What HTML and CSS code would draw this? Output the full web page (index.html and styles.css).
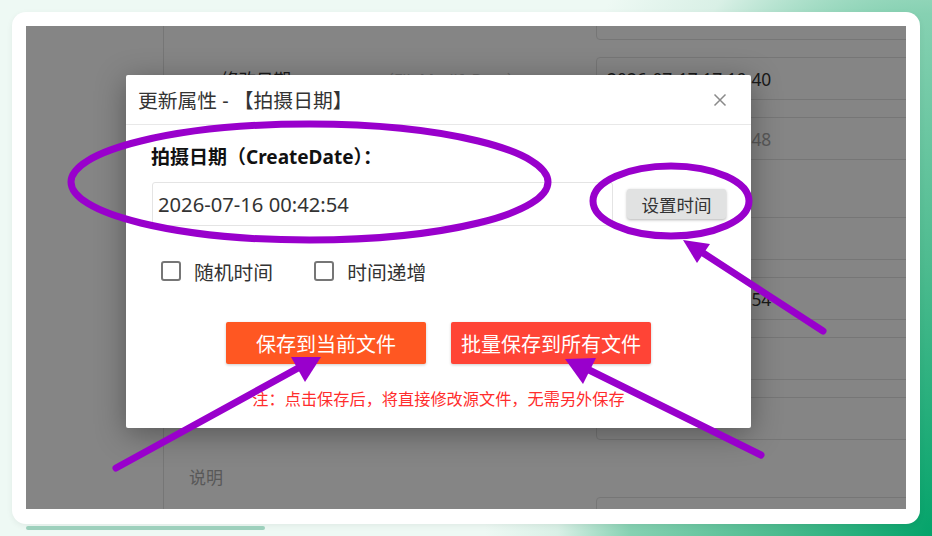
FILE: index.html
```html
<!DOCTYPE html>
<html lang="zh-CN">
<head>
<meta charset="utf-8">
<title>更新属性</title>
<link rel="stylesheet" href="styles.css">
</head>
<body>
<div class="page">
  <div class="card">
    <div class="screen">
      <div class="app">
        <aside class="side"></aside>
        <main class="form">
          <div class="field"><div class="cell"></div><div class="box"></div></div>
          <div class="field"><div class="cell"><span class="label">修改日期</span><span class="hint">（FileModifyDate）</span></div><div class="box">2026-07-17 17:19:40</div></div>
          <div class="field"><div class="cell"></div><div class="box muted">2026-07-16 00:42:48</div></div>
          <div class="spacer"></div>
          <div class="field"><div class="cell"></div><div class="box"></div></div>
          <div class="field"><div class="cell"></div><div class="box">2026-07-16 00:42:54</div></div>
          <div class="field"><div class="cell"></div><div class="box"></div></div>
          <div class="field"><div class="cell"></div><div class="box"></div></div>
          <div class="spacer"><span class="label2">说明</span></div>
          <div class="field"><div class="cell"></div><div class="box"></div></div>
        </main>
      </div>
      <div class="mask"></div>
      <div class="dialog">
        <div class="dlg-head">
          <span class="dlg-title">更新属性 - 【拍摄日期】</span>
          <svg class="close" width="14" height="14" viewBox="0 0 14 14"><path d="M1.5 1.5 L12.5 12.5 M12.5 1.5 L1.5 12.5" stroke="#8a8a8a" stroke-width="1.5" fill="none"/></svg>
        </div>
        <div class="dlg-body">
          <div class="lbl">拍摄日期（CreateDate）：</div>
          <div class="input-row">
            <div class="input">2026-07-16 00:42:54</div>
            <div class="set-btn">设置时间</div>
          </div>
          <div class="checks">
            <label class="check"><span class="cbox"></span><span>随机时间</span></label>
            <label class="check"><span class="cbox"></span><span>时间递增</span></label>
          </div>
          <div class="actions">
            <div class="btn btn-cur">保存到当前文件</div>
            <div class="btn btn-all">批量保存到所有文件</div>
          </div>
          <div class="note">注：点击保存后，将直接修改源文件，无需另外保存</div>
        </div>
      </div>
    </div>
  </div>
  <div class="bar"></div>
  <svg class="marks" width="932" height="536" viewBox="0 0 932 536">
    <g fill="none" stroke="#9900cc" stroke-width="7" stroke-linecap="round">
      <ellipse cx="309.5" cy="182" rx="238.5" ry="58"/>
      <ellipse cx="671" cy="201" rx="78" ry="35"/>
      <line x1="823" y1="331" x2="700" y2="251"/>
      <line x1="116" y1="468" x2="300" y2="367"/>
      <line x1="761" y1="455" x2="585" y2="368"/>
    </g>
    <g fill="#9900cc">
      <polygon points="683,240 710,244 697,263"/>
      <polygon points="321,357 291,357 305,382"/>
      <polygon points="565,359 596,358 583,384"/>
    </g>
  </svg>
</div>
</body>
</html>
```

FILE: styles.css
```css
html, body {
  margin: 0;
  padding: 0;
  background: #eef9f4;
}

.page {
  position: relative;
  width: 932px;
  height: 536px;
  box-sizing: border-box;
  padding: 12px;
  overflow: hidden;
  font-family: "Noto Sans", "Noto Sans CJK SC", sans-serif;
  background:
    radial-gradient(ellipse 520px 900px at 100% 100%, #04a36a 0%, #4dbb8f 30%, #86d1b2 58%, #d9f0e6 72%, rgba(238, 249, 244, 0) 86%),
    #eef9f4;
}

.card {
  height: 512px;
  box-sizing: border-box;
  padding: 14px 14px 15px;
  background: #fff;
  border-radius: 14px;
  box-shadow: 0 2px 6px rgba(0, 0, 0, 0.06);
}

.screen {
  position: relative;
  height: 483px;
  overflow: hidden;
  background: #fff;
}

.app {
  display: flex;
  height: 100%;
}

.side {
  width: 137px;
  flex: none;
  border-right: 1px solid #e2e2e2;
}

.form {
  flex: 1;
  display: flex;
  flex-direction: column;
  gap: 17px;
  margin-top: -29px;
}

.field {
  display: grid;
  grid-template-columns: 432px 1fr;
  height: 43px;
  flex: none;
}

.cell {
  display: flex;
  align-items: center;
  padding-left: 57px;
}

.label {
  width: 157px;
  font-size: 17.5px;
  color: #333;
}

.hint {
  font-size: 16px;
  color: #c8c8c8;
}

.box {
  margin-right: -10px;
  box-sizing: border-box;
  border: 1px solid #e2e2e2;
  border-radius: 4px;
  padding-left: 10px;
  display: flex;
  align-items: center;
  font-size: 17.4px;
  color: #333;
}

.box.muted {
  color: #aaa;
}

.spacer {
  height: 23px;
  flex: none;
}

.label2 {
  display: block;
  padding: 9px 0 0 25px;
  line-height: 23px;
  font-size: 17px;
  color: #aaa;
}

.mask {
  position: absolute;
  inset: 0;
  background: rgba(0, 0, 0, 0.48);
}

.dialog {
  position: absolute;
  left: 100px;
  top: 49px;
  width: 625px;
  height: 353px;
  background: #fff;
  border-radius: 2px;
  box-shadow: 0 6px 30px rgba(0, 0, 0, 0.35);
}

.dlg-head {
  height: 49px;
  border-bottom: 1px solid #e8e8e8;
  display: flex;
  align-items: center;
  justify-content: space-between;
  padding: 0 24px 0 12px;
}

.dlg-title {
  font-size: 19.8px;
  color: #333;
}

.close {
  display: block;
}

.dlg-body {
  padding: 20px 25px 0;
}

.lbl {
  font-weight: bold;
  font-size: 19px;
  line-height: 24px;
  color: #111;
}

.input-row {
  margin-top: 13px;
  display: flex;
  align-items: center;
}

.input {
  width: 461px;
  height: 44px;
  margin-left: 1px;
  box-sizing: border-box;
  border: 1px solid #e4e4e4;
  border-radius: 3px;
  padding-left: 5px;
  display: flex;
  align-items: center;
  font-size: 20.2px;
  color: #333;
}

.set-btn {
  margin-left: 14px;
  width: 99px;
  height: 30px;
  display: flex;
  align-items: center;
  justify-content: center;
  background: #e1e2e2;
  border-radius: 3px;
  box-shadow: 0 1px 3px rgba(0, 0, 0, 0.3);
  font-size: 17.5px;
  color: #333;
}

.checks {
  margin-top: 33px;
  height: 24px;
  padding-left: 10px;
  display: flex;
  align-items: center;
  gap: 41px;
}

.check {
  display: flex;
  align-items: center;
  gap: 13px;
  font-size: 19.8px;
  color: #333;
}

.cbox {
  width: 20px;
  height: 20px;
  box-sizing: border-box;
  border: 2px solid #767676;
  border-radius: 3px;
  background: #fff;
}

.actions {
  margin-top: 39px;
  display: flex;
  justify-content: center;
  gap: 25px;
}

.btn {
  width: 200px;
  height: 42px;
  display: flex;
  align-items: center;
  justify-content: center;
  border-radius: 2px;
  box-shadow: 0 1px 3px rgba(0, 0, 0, 0.2);
  font-size: 20px;
  color: #fff;
}

.btn-cur {
  background: #ff5722;
}

.btn-all {
  background: #ff4436;
}

.note {
  margin-top: 24px;
  text-align: center;
  font-size: 16.2px;
  line-height: 22px;
  color: #ff2d2d;
}

.bar {
  margin: 2px 0 0 14px;
  width: 239px;
  height: 4px;
  border-radius: 2px;
  background: #9dd0bc;
}

.marks {
  position: absolute;
  left: 0;
  top: 0;
  pointer-events: none;
}
```
